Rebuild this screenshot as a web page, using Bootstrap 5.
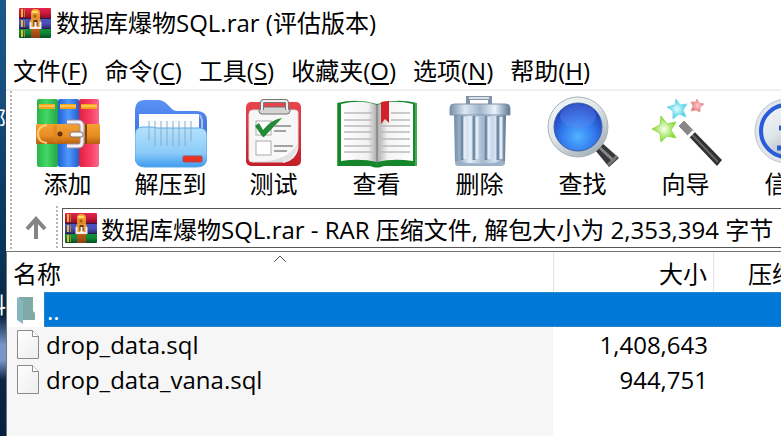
<!DOCTYPE html>
<html lang="zh-CN">
<head>
<meta charset="utf-8">
<meta name="viewport" content="width=device-width, initial-scale=1">
<title>数据库爆物SQL.rar</title>
<link href="https://cdn.jsdelivr.net/npm/bootstrap@5.3.0/dist/css/bootstrap.min.css" rel="stylesheet">
<style>
body { font-family: "Open Sans", "Noto Sans CJK SC", sans-serif; font-size: 24px; line-height: 32px; color: #000; background: #fff; }
svg { display: block; flex: none; }
main { min-width: 0; }
.desk { width: 6px; flex: none; color: #fff; font-size: 22px; line-height: 24px; padding-top: 106px; gap: 162px;
  background: linear-gradient(#1b588c 0, #17507f 90px, #0d3f69 170px, #093357 260px, #082440 316px, #7896c8 345px, #7896c8 360px, #0b2444 380px, #082040 100%); }
.desk span { width: 6px; height: 24px; overflow: hidden; }
.titlebar { height: 46px; padding-left: 13px; gap: 5px; }
.menus { height: 45px; padding: 6px 0 0 7px; gap: 17px; border-bottom: 2px solid #f0f0f0; }
.menus a { color: #000; text-decoration: none; }
.menus u { text-underline-offset: 3px; text-decoration-thickness: 2px; }
.bars { padding-left: 4px; border-bottom: 1px solid #fff; }
.grip { width: 2px; flex: none; background: repeating-linear-gradient(#b9b3b3 0 2px, #fff 2px 4px); }
.tool { width: 103px; flex: none; height: 115px; padding: 0; border: 0; background: none; color: #000; }
.tool svg { margin: 0 auto; }
.tool span { display: block; line-height: 32px; margin-bottom: 4px; }
.tools { padding-left: 4px; }
.upbtn { width: 44px; border: 0; background: none; padding: 0 0 0 4px; }
.address { height: 40px; margin: 2px 0 2px 4px; padding-left: 2px; gap: 4px; border: 1px solid #555; border-right: 0; }
.address input { border: 0; outline: 0; padding: 0; min-width: 0; height: 36px; color: #000; }
.list { border: solid #73777c; border-width: 1px 0 0 1px; background: linear-gradient(90deg, #f6f6f6 546px, #fff 546px); }
.files { width: 100%; min-width: 866px; table-layout: fixed; border-collapse: separate; border-spacing: 0; }
.files th { height: 40px; font-weight: 400; padding: 4px 6px 0; background: #fff; border-right: 1px solid #e3e3e3; position: relative; }
.files td { height: 35px; padding: 0 6px 0 0; vertical-align: middle; line-height: 33px; }
.files .fname { padding: 0; }
.files .label { height: 35px; padding: 1px 2px; }
.ico { width: 37px; flex: none; padding-left: 10px; }
.picked td { background: #0078d7; color: #fff; border: dotted #4f8fc0; border-width: 1px 0; }
.picked .fname { background: #fff; border: 0; }
.picked .label { background: #0078d7; border: 1px dotted #4f8fc0; border-right: 0; }
.sort { position: absolute; left: 266px; top: 3px; }
</style>
<script src="https://cdn.jsdelivr.net/npm/bootstrap@5.3.0/dist/js/bootstrap.bundle.min.js"></script>
</head>
<body class="overflow-hidden">
<svg width="0" height="0" class="position-absolute" aria-hidden="true">
<defs>
<linearGradient id="r1" x2="0" y2="1"><stop stop-color="#e3274d"/><stop offset=".5" stop-color="#c5163c"/><stop offset="1" stop-color="#7a0c26"/></linearGradient>
<linearGradient id="b1" x2="0" y2="1"><stop stop-color="#4657c8"/><stop offset=".5" stop-color="#4a4fb8"/><stop offset="1" stop-color="#242a6e"/></linearGradient>
<linearGradient id="g1" x2="0" y2="1"><stop stop-color="#14953f"/><stop offset=".5" stop-color="#0c8736"/><stop offset="1" stop-color="#064d20"/></linearGradient>
<linearGradient id="belt" x2="0" y2="1"><stop stop-color="#f6b03a"/><stop offset=".6" stop-color="#c96a18"/><stop offset="1" stop-color="#8f3d10"/></linearGradient>
<linearGradient id="steel"><stop stop-color="#6f8ba6"/><stop offset=".3" stop-color="#e4eef8"/><stop offset=".55" stop-color="#a5bbd2"/><stop offset=".8" stop-color="#d5e3f2"/><stop offset="1" stop-color="#58758f"/></linearGradient>
<linearGradient id="gg"><stop stop-color="#27b44a"/><stop offset=".45" stop-color="#45d766"/><stop offset="1" stop-color="#22a448"/></linearGradient>
<linearGradient id="bb"><stop stop-color="#1f62d6"/><stop offset=".5" stop-color="#4f98fb"/><stop offset="1" stop-color="#225fd0"/></linearGradient>
<linearGradient id="rr"><stop stop-color="#dc2143"/><stop offset=".6" stop-color="#fb4063"/><stop offset="1" stop-color="#f76a92"/></linearGradient>
<linearGradient id="strap" x2="0" y2="1"><stop stop-color="#f2a233"/><stop offset=".6" stop-color="#e88c22"/><stop offset="1" stop-color="#b65c10"/></linearGradient>
<linearGradient id="fold" x2="0" y2="1"><stop stop-color="#5b92f6"/><stop offset="1" stop-color="#2455cf"/></linearGradient>
<linearGradient id="pocket" x2="0" y2="1"><stop stop-color="#b5e2fd"/><stop offset=".65" stop-color="#8bcbf9"/><stop offset="1" stop-color="#3f9bf0"/></linearGradient>
<linearGradient id="page"><stop stop-color="#fff"/><stop offset=".75" stop-color="#f1f1f1"/><stop offset="1" stop-color="#aaa"/></linearGradient>
<linearGradient id="page2"><stop stop-color="#aaa"/><stop offset=".3" stop-color="#f4f4f4"/><stop offset="1" stop-color="#fff"/></linearGradient>
<linearGradient id="redb" x2="0" y2="1"><stop stop-color="#e8454c"/><stop offset="1" stop-color="#c31f2a"/></linearGradient>
<linearGradient id="lid"><stop stop-color="#7790a8"/><stop offset=".25" stop-color="#dce8f4"/><stop offset=".5" stop-color="#9fb5cb"/><stop offset=".75" stop-color="#eaf2fb"/><stop offset="1" stop-color="#5a7590"/></linearGradient>
<radialGradient id="lens" cx=".5" cy=".7" r=".65"><stop stop-color="#52b2ff"/><stop offset=".5" stop-color="#347ef0"/><stop offset="1" stop-color="#1d3bb8"/></radialGradient>
<linearGradient id="rim" x2=".7" y2="1"><stop stop-color="#f4f7f8"/><stop offset=".5" stop-color="#dfe6ea"/><stop offset="1" stop-color="#a4b0b8"/></linearGradient>
<radialGradient id="sg"><stop stop-color="#fcfff4"/><stop offset="1" stop-color="#7ddb1f"/></radialGradient>
<radialGradient id="sc"><stop stop-color="#e8fcff"/><stop offset="1" stop-color="#35cbe8"/></radialGradient>
<radialGradient id="sr"><stop stop-color="#fbd0d0"/><stop offset="1" stop-color="#e87078"/></radialGradient>
<linearGradient id="doc" x2="1" y2="1"><stop stop-color="#fff"/><stop offset="1" stop-color="#ededed"/></linearGradient>
</defs>
<symbol id="rar" viewBox="0 0 32 30">
<rect width="32" height="11" rx="1" fill="url(#r1)"/><rect y="10" width="32" height="11" rx="1" fill="url(#b1)"/><rect y="20" width="32" height="10" rx="1" fill="url(#g1)"/>
<path d="M3 1v8M3 12v7M3 22v7" stroke="#e7b92b" stroke-width="2"/><path d="M5.500 1v8M5.500 12v7M5.500 22v7" stroke="#a98537"/>
<path d="M0 10.500h32M0 20.500h32" stroke="#331744"/>
<path d="M12 5q0-4 4-4 5 0 5 4v25H12z" fill="url(#belt)"/>
<path d="M11 14q0-3 2-3h7q2 0 2 3v6H11z" fill="#e99c31"/>
<path d="M11.500 14v6h10v-6" fill="none" stroke="#f4e9ea" stroke-width="2"/>
<path d="M16.500 12v6" stroke="#5b3518" stroke-width="4"/><path d="M16.500 14v6" stroke="#fff" stroke-width="2"/>
<circle cx="16" cy="8" r="1.500" fill="#a55c12"/><path d="M13 4h6" stroke="#ffdb61" stroke-width="2"/>
</symbol>
</svg>

<div class="d-flex min-vh-100">
<div class="desk d-flex flex-column" aria-hidden="true"><span class="d-flex justify-content-end">部</span><span class="d-flex justify-content-end">料</span></div>
<main class="flex-grow-1 d-flex flex-column overflow-hidden">
<header class="titlebar d-flex align-items-center text-nowrap">
<svg width="32" height="30"><use href="#rar"/></svg><span>数据库爆物SQL.rar (评估版本)</span>
</header>
<nav class="menus d-flex align-items-center text-nowrap">
<a href="#">文件(<u>F</u>)</a><a href="#">命令(<u>C</u>)</a><a href="#">工具(<u>S</u>)</a><a href="#">收藏夹(<u>O</u>)</a><a href="#">选项(<u>N</u>)</a><a href="#">帮助(<u>H</u>)</a>
</nav>
<div class="bars d-flex">
<div class="grip"></div>
<div class="flex-grow-1 overflow-hidden">
<div class="tools d-flex overflow-hidden">
<button type="button" class="tool"><svg width="72" height="74" viewBox="0 0 72 74">
<rect x="5" y="5" width="21" height="68" rx="2" fill="url(#gg)"/><rect x="26" y="5" width="21" height="68" rx="2" fill="url(#bb)"/><rect x="47" y="5" width="20" height="68" rx="2" fill="url(#rr)"/>
<path d="M7 12.500h16M28 12.500h16M49 12.500h16" stroke="#f5a51d" stroke-width="5"/><path d="M7 12h16M28 12h16M49 12h16" stroke="#ffc44b" stroke-width="2"/>
<rect x="4" y="30" width="64" height="20" rx="1" fill="url(#strap)"/><path d="M15 31q-9 1-9 9t9 9" fill="none" stroke="#ffce74" stroke-width="2"/><path d="M22 31v18M24 31v18" stroke="#d7801e"/>
<path d="M35 28h11q4 0 4 4v16q0 4-4 4H35" fill="none" stroke="#998f98" stroke-width="5"/><path d="M35 28h11q4 0 4 4v16q0 4-4 4H35" fill="none" stroke="#f2eef4" stroke-width="3"/>
<circle cx="28" cy="40" r="2.500" fill="#653009"/><rect x="38" y="38" width="13" height="5" rx="2" fill="#f7f6f9" stroke="#81705f"/><path d="M54 30v20" stroke="#864009" stroke-width="2"/></svg><span>添加</span></button>
<button type="button" class="tool"><svg width="72" height="74" viewBox="0 0 72 74">
<path d="M0 17q0-11 10-11h13q5 0 9 4l5 5q2 2 5 2h20q10 0 10 10v35q0 8-9 8H9q-9 0-9-9z" fill="url(#fold)"/>
<path d="M4 20h60v25H4z" fill="#f9fbff"/><path d="M65 21l2 5v12" fill="none" stroke="#afbfe0" stroke-width="2"/>
<path d="M0 41q0-8 8-8h7q4 0 7 1h42q8 0 8 8v21q0 10-10 10H10Q0 73 0 63z" fill="url(#pocket)" stroke="#58a9e9"/>
<path d="M14 27v20M20 27v25M26 27v25M32 27v25M38 27v25M44 27v25M50 27v25M56 27v20" stroke="#8eaac0" stroke-opacity=".65" stroke-width="1.500"/>
<rect x="48" y="62" width="19" height="6" rx="1" fill="#e83223" stroke="#a94c5b"/></svg><span>解压到</span></button>
<button type="button" class="tool"><svg width="72" height="74" viewBox="0 0 72 74">
<rect x="8" y="8" width="55" height="64" rx="5" fill="url(#redb)"/><path d="M15 16h42q3 0 3 3v35q-2 11-14 14H14q-3 0-3-3V20q0-4 4-4" fill="#f7f7f7" stroke="#ddd"/>
<path d="M60 53q-8 7-19 7 6 5 4 9 14-3 15-16" fill="#fff"/><path d="M16 67q29 3 44-17-2 16-14 18z" fill="#bcbcbc" opacity=".4"/>
<rect x="21" y="13" width="31" height="7" rx="3" fill="#d5d5d5" stroke="#707070"/><path d="M24 16V9q0-2 2-2h21q2 0 2 2v7" fill="none" stroke="#777" stroke-width="4"/><path d="M24 16V9q0-2 2-2h21q2 0 2 2v7" fill="none" stroke="#eee" stroke-width="2"/>
<rect x="18" y="27" width="15" height="14" fill="#fff" stroke="#aaa"/><rect x="18" y="47" width="15" height="14" fill="#fff" stroke="#aaa"/>
<path d="M17 32l4-3 4 7q9-11 19-12L27 42q-2 2-3 0z" fill="#238a35"/><path d="M36 32h17M36 37h12M36 52h19M36 57h13" stroke="#888" stroke-width="1.500"/></svg><span>测试</span></button>
<button type="button" class="tool"><svg width="80" height="74" viewBox="0 0 80 74">
<path d="M0 9q20-5 40 1 20-6 40-1v63H47q-7 3-14 0H0z" fill="#15872a"/><path d="M0 9v63M79 9v63" stroke="#45ad51" stroke-width="2"/>
<path d="M4 10q20-5 36 1v57q-16-4-36-1z" fill="url(#page)"/><path d="M76 10q-20-5-36 1v57q16-4 36-1z" fill="url(#page2)"/>
<path d="M7 19h28M7 26h28M7 32h28M7 38h28M7 45h28M7 52h28M7 58h28M54 19h19M54 26h19M44 32h29M44 38h29M44 45h29M44 52h29M44 58h29" stroke="#bbb" stroke-width="1.500"/>
<path d="M40 11v60" stroke="#707070"/><path d="M44 8q4-1 8-1v22l-4-4-4 5z" fill="#d2202c"/></svg><span>查看</span></button>
<button type="button" class="tool"><svg width="72" height="74" viewBox="0 0 72 74">
<path d="M24 12V4h22v8" fill="none" stroke="#8295a8" stroke-width="4"/><path d="M25 4h20" stroke="#dae1e9" stroke-width="2"/>
<path d="M10 20h52l-1 48q0 4-5 4H15q-4 0-4-4z" fill="url(#steel)"/><path d="M11 67q25 5 50 0v1q0 4-5 4H15q-4 0-4-4z" fill="#9db1c6"/>
<path d="M18 22v44M30 22v44M42 22v44M54 22v44" stroke="#718ba7" stroke-width="3"/><path d="M21 23v42M33 23v42M45 23v42M57 23v42" stroke="#e1ecf7" stroke-width="3"/>
<path d="M10 10h52q4 0 4 4v7H6v-7q0-4 4-4" fill="url(#lid)" stroke="#7d93aa"/></svg><span>删除</span></button>
<button type="button" class="tool"><svg width="72" height="74" viewBox="0 0 72 74">
<path d="M48 56l6-8 18 16-10 9z" fill="#36383c"/><path d="M53 54l14 13" stroke="#85868a" stroke-width="3"/><path d="M61 71l9-9" stroke="#777" stroke-width="3"/>
<circle cx="31" cy="33" r="30" fill="url(#rim)" stroke="#a8b2b6"/><circle cx="31" cy="33" r="24" fill="url(#lens)" stroke="#4262a6"/><ellipse cx="31" cy="22" rx="18" ry="12" fill="#6087ee" opacity=".4"/></svg><span>查找</span></button>
<button type="button" class="tool"><svg width="72" height="74" viewBox="0 0 72 74">
<path d="M11 22l6 8 9-2-5 8 5 8-9-2-6 6-1-9-8-4 8-4z" fill="url(#sg)" stroke="#95db51"/>
<path d="M26 5l4 6 7-1-4 6 3 7-7-3-6 5v-8l-6-4 8-2z" fill="url(#sc)" stroke="#7bdceb"/>
<path d="M47 5l2 4 5 1-4 3v5l-4-2-5 1 2-5-2-4h5z" fill="url(#sr)" stroke="#eda0a4"/>
<path d="M29 32l5-5 38 39-5 6z" fill="#303030"/><path d="M33 31l35 37" stroke="#666" stroke-width="2"/><path d="M29 32l5-5 10 10-6 5z" fill="#888"/><path d="M38 43l6-6" stroke="#fff" stroke-width="3"/></svg><span>向导</span></button>
<button type="button" class="tool"><svg width="72" height="74" viewBox="0 0 72 74">
<circle cx="34" cy="37" r="32" fill="#e2e6ea" stroke="#bbc4cb"/><circle cx="34" cy="37" r="26" fill="url(#rim)" stroke="#285cdb" stroke-width="4"/><circle cx="34" cy="22" r="4" fill="#285cdb"/><path d="M26 34h10v20M24 54h20" fill="none" stroke="#285cdb" stroke-width="5"/></svg><span>信息</span></button>
</div>
<div class="d-flex">
<button type="button" class="upbtn flex-shrink-0 d-flex align-items-center justify-content-center" aria-label="上一级"><svg width="24" height="24" viewBox="0 0 24 24"><path d="M12 23V3M3 13L12 3l9 10" fill="none" stroke="#858585" stroke-width="4"/></svg></button>
<div class="grip"></div>
<div class="address d-flex align-items-center flex-grow-1"><svg width="32" height="30"><use href="#rar"/></svg>
<input type="text" class="flex-grow-1" aria-label="地址" readonly value="数据库爆物SQL.rar - RAR 压缩文件, 解包大小为 2,353,394 字节"></div>
</div>
</div>
</div>
<div class="list flex-grow-1 overflow-hidden">
<table class="files">
<colgroup><col style="width:547px"><col style="width:160px"><col style="width:161px"><col></colgroup>
<thead><tr><th>名称<svg class="sort" width="14" height="8" viewBox="0 0 14 8"><path d="M1 7l6-6 6 6" fill="none" stroke="#555"/></svg></th><th class="text-end">大小</th><th class="text-end">压缩后大小</th><th></th></tr></thead>
<tbody>
<tr class="picked"><td class="fname"><div class="d-flex align-items-center"><span class="ico"><svg width="20" height="28" viewBox="0 0 20 28"><path d="M2 1h14v14l2 2v7H2z" fill="#80aaa8"/><path d="M0 1l6 4v23l-6-4z" fill="#86b6c0"/></svg></span><span class="label flex-grow-1">..</span></div></td><td></td><td></td><td></td></tr>
<tr><td class="fname"><div class="d-flex align-items-center"><span class="ico"><svg width="22" height="29" viewBox="0 0 22 29"><path d="M.5.500h15l6 6v22H.5z" fill="url(#doc)" stroke="#8b8b8b"/><path d="M15.500.500v6h6" fill="#fff" stroke="#8b8b8b"/></svg></span><span class="label flex-grow-1">drop_data.sql</span></div></td><td class="text-end">1,408,643</td><td></td><td></td></tr>
<tr><td class="fname"><div class="d-flex align-items-center"><span class="ico"><svg width="22" height="29" viewBox="0 0 22 29"><path d="M.5.500h15l6 6v22H.5z" fill="url(#doc)" stroke="#8b8b8b"/><path d="M15.500.500v6h6" fill="#fff" stroke="#8b8b8b"/></svg></span><span class="label flex-grow-1">drop_data_vana.sql</span></div></td><td class="text-end">944,751</td><td></td><td></td></tr>
</tbody>
</table>
</div>
</main>
</div>
</body>
</html>
